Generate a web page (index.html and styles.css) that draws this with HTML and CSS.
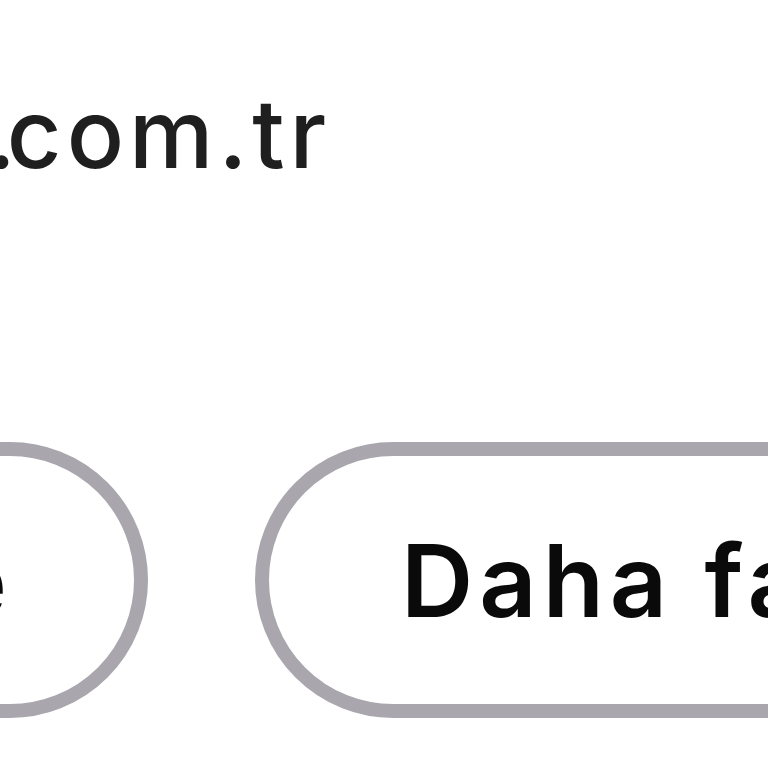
FILE: index.html
```html
<!DOCTYPE html>
<html lang="tr">
<head>
<meta charset="utf-8">
<link rel="stylesheet" href="styles.css">
</head>
<body>
<div class="page">
  <p class="domain"><span class="dot">.</span>com.tr</p>
  <div class="actions">
    <button class="pill pill-left"><span class="label">Tekrar dene</span></button>
    <button class="pill pill-right"><span class="label">Daha fazla</span></button>
  </div>
</div>
</body>
</html>
```
FILE: styles.css
```css
html, body {
  margin: 0;
  padding: 0;
  background: #ffffff;
  overflow: hidden;
}
.page {
  width: 768px;
  height: 768px;
  overflow: hidden;
  font-family: Inter, "Noto Sans", sans-serif;
}
.domain {
  margin: 0;
  padding-top: 79px;
  margin-left: -13px;
  font-size: 95px;
  line-height: 110px;
  font-weight: 500;
  color: #1f1f1f;
  white-space: nowrap;
  letter-spacing: 5px;
}
.dot {
  letter-spacing: -9px;
}
.actions {
  display: flex;
  gap: 107px;
  margin-top: 253px;
  white-space: nowrap;
}
.pill {
  flex: none;
  box-sizing: border-box;
  height: 276px;
  border: 14px solid #a9a6ae;
  border-radius: 999px;
  background: #ffffff;
  font-family: Inter, "Noto Sans", sans-serif;
  font-size: 100px;
  font-weight: 600;
  color: #0a0a0a;
  display: flex;
  align-items: center;
  white-space: nowrap;
}
.label {
  letter-spacing: 6px;
  margin-right: -6px;
}
.pill-left {
  margin-left: -952px;
  padding: 0 127px 0 120px;
  width: 1100px;
  justify-content: flex-end;
}
.pill-right {
  padding: 0 130px 0 132px;
}
```
